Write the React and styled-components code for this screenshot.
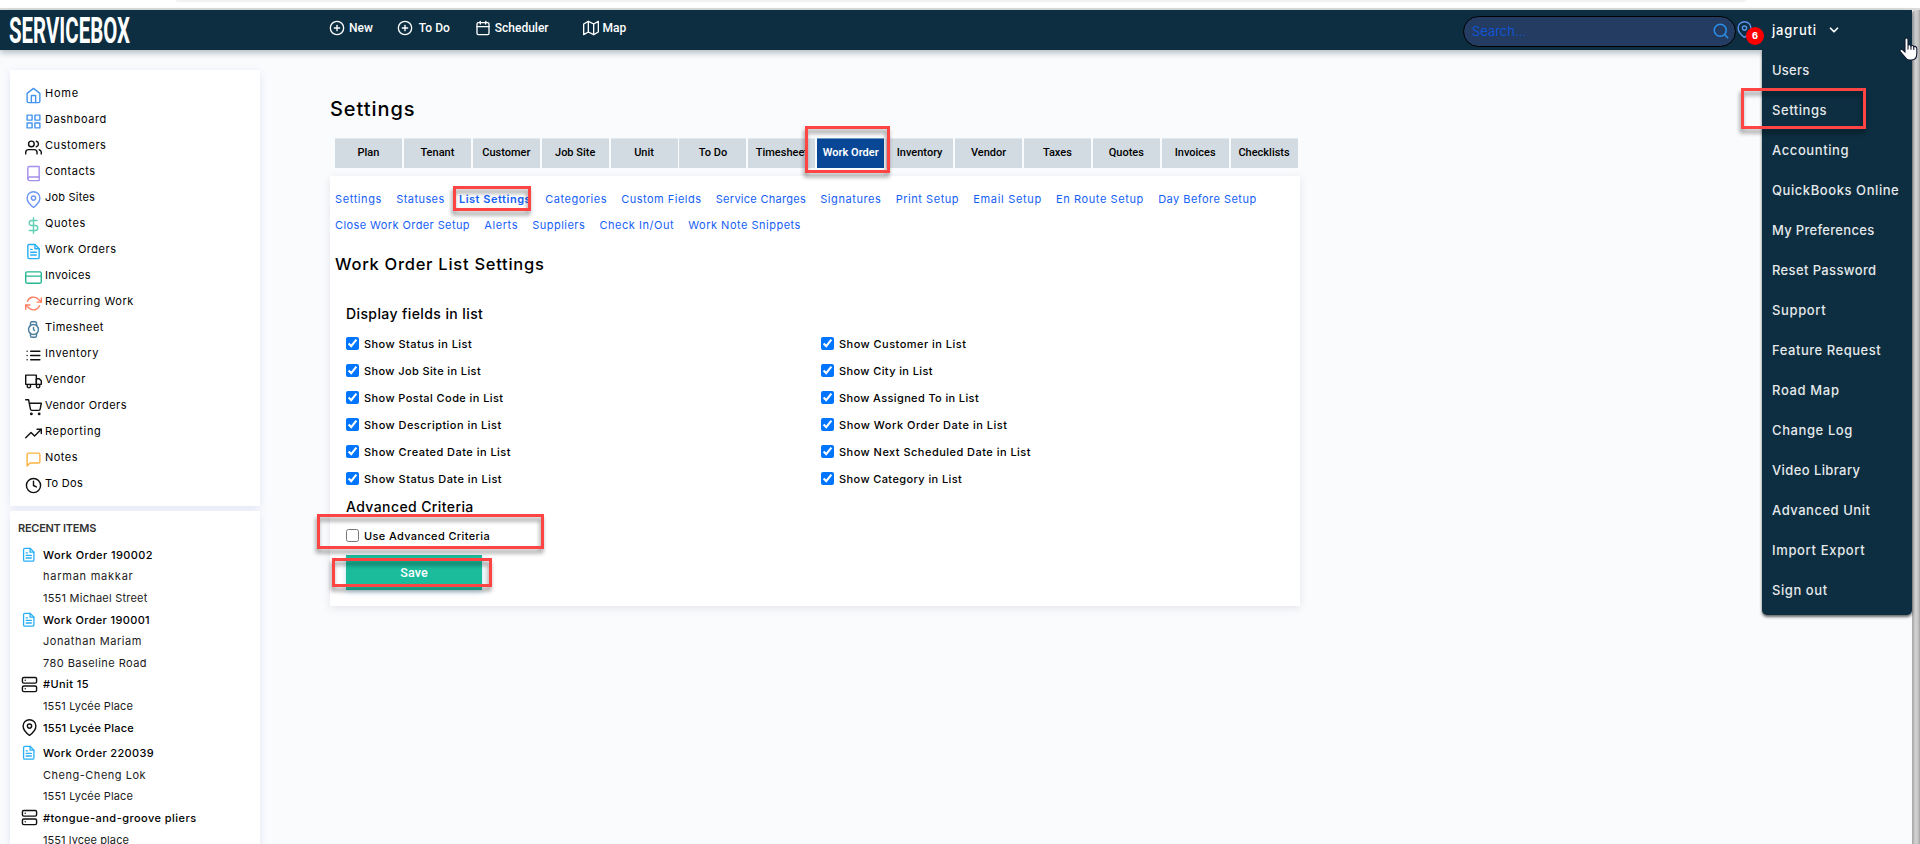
import styled, { createGlobalStyle } from "styled-components"
import {
  FiHome, FiGrid, FiUsers, FiBook, FiMapPin, FiDollarSign, FiFileText, FiCreditCard,
  FiRefreshCw, FiWatch, FiList, FiTruck, FiShoppingCart, FiTrendingUp, FiMessageSquare,
  FiClock, FiServer, FiPlusCircle, FiCalendar, FiMap, FiSearch, FiChevronDown
} from "react-icons/fi"

const GlobalStyle = createGlobalStyle`
* { box-sizing: border-box; }
body {
  margin: 0;
  background: #fafbfd;
  color: #000;
  font-family: Inter, "Noto Sans", sans-serif;
  font-size: 11px;
}
`
const Page = styled.div`
position: relative;
height: 844px;
overflow: hidden;
display: flex;
flex-direction: column;
`
const BrowserEdge = styled.div`
flex: none;
height: 10px;
background: #fff;
border-bottom: 2px solid #dcdcdc;
padding: 0 174px 0 176px;
`
const AddressBar = styled.div`
height: 2px;
background: #f2f2f2;
border-radius: 0 0 4px 4px;
`
const Body = styled.div`
flex: 1;
min-height: 0;
display: flex;
`
const Viewport = styled.div`
flex: 1;
min-width: 0;
display: flex;
flex-direction: column;
`
const Scrollbar = styled.div`
width: 8px;
border-radius: 4px 0 0 0;
background: linear-gradient(to right, #a4a4a4, #d2d2d2 45%, #c6c6c6 75%, #a2a2a2);
`
const Header = styled.header`
flex: none;
position: relative;
z-index: 2;
height: 40px;
background: #0c2e40;
color: #fff;
display: flex;
align-items: center;
padding-left: 8px;
box-shadow: 0 3px 6px rgba(12,46,64,0.3);
`
const Logo = styled.svg`
width: 126px;
height: 40px;
overflow: visible;
fill: #fff;
font-family: Roboto, sans-serif;
font-weight: 700;
font-size: 37px;
`
const TopNav = styled.nav`
display: flex;
align-items: center;
align-self: flex-start;
margin-left: 195px;
height: 35px;
`
const TopLink = styled.a`
display: flex;
align-items: center;
gap: ${p => p.$gap}px;
margin-right: ${p => p.$after}px;
font-family: Roboto, sans-serif;
font-weight: 500;
font-size: 12px;
white-space: nowrap;
`
const Search = styled.div`
display: flex;
align-items: center;
width: 273px;
height: 31px;
margin: 2px 0 0 auto;
padding: 0 5px 0 7px;
background: #243c61;
border: 1px solid #000;
border-radius: 16px;
color: #2b8fe8;
`
const SearchInput = styled.input`
flex: 1;
min-width: 0;
border: 0;
padding: 0 0 0 1px;
outline: none;
background: transparent;
font: 300 13px Inter, sans-serif;
letter-spacing: 0.1px;
&::placeholder {
  color: #0a5bea;
  opacity: 1;
}
`
const PinButton = styled.div`
position: relative;
width: 17px;
height: 17px;
margin: 0 19px 2px 0;
color: #5b93ea;
`
const Badge = styled.span`
position: absolute;
left: 10px;
top: 6px;
width: 18px;
height: 18px;
border-radius: 50%;
background: #fb0000;
color: #fff;
font-weight: 800;
font-size: 9px;
line-height: 18px;
text-align: center;
`
const Account = styled.div`
display: flex;
align-items: center;
gap: 10px;
width: 140px;
font-weight: 500;
font-size: 13px;
letter-spacing: 0.8px;
`
const Dropdown = styled.div`
position: absolute;
z-index: 3;
right: 8px;
top: 50px;
width: 150px;
padding-bottom: 5px;
background: #0c2e40;
border-radius: 0 0 5px 5px;
box-shadow: 0 2px 3px rgba(0,0,0,0.6);
`
const DropdownItem = styled.a`
display: flex;
align-items: center;
height: 40px;
padding-left: 10px;
color: #e6e9eb;
font-weight: 500;
font-size: 13px;
letter-spacing: ${p => p.$ls}px;
white-space: nowrap;
`
const Columns = styled.div`
flex: 1;
min-height: 0;
display: flex;
align-items: flex-start;
padding: 20px 0 0 10px;
`
const Sidebar = styled.aside`
width: 250px;
display: flex;
flex-direction: column;
gap: 5px;
`
const SideCard = styled.div`
background: #fff;
padding: ${p => p.$pad};
box-shadow: 0 2px 8px rgba(70,90,190,0.13);
`
const NavItem = styled.a`
display: flex;
align-items: center;
height: 26px;
gap: 3px;
letter-spacing: ${p => p.$ls}px;
svg {
  color: ${p => p.$color};
  margin-top: 5px;
}
`
const RecentTitle = styled.div`
height: 18px;
line-height: 18px;
margin: 0 0 7px -2px;
padding-left: 10px;
font-weight: 600;
letter-spacing: -0.27px;
color: #333;
`
const RecentRow = styled.div`
display: flex;
align-items: center;
height: 21.6px;
margin-top: ${p => p.$gap || 0}px;
font-weight: ${p => p.$bold ? 500 : 400};
letter-spacing: ${p => p.$ls}px;
color: ${p => p.$bold ? "#000" : "#1a1a1a"};
`
const RecentIcon = styled.span`
width: 22px;
margin: 0 3px 0 8px;
display: flex;
justify-content: center;
color: ${p => p.$color};
`
const Main = styled.main`
width: 970px;
margin-left: 70px;
`
const PageTitle = styled.h1`
margin: 27px 0 17px;
font-weight: 500;
font-size: 20px;
line-height: 24px;
letter-spacing: 0.94px;
`
const Tabs = styled.div`
display: flex;
gap: 1.9px;
padding-left: 5px;
margin-bottom: 8px;
`
const Tab = styled.div`
width: 67px;
height: 30px;
padding-bottom: 2px;
display: flex;
align-items: center;
justify-content: center;
border-top: 1px solid ${p => p.$active ? "#6f97c0" : "#e3e8ec"};
background: ${p => p.$active ? "#074796" : "#d3dbe2"};
color: ${p => p.$active ? "#fff" : "#000"};
font-family: Roboto, sans-serif;
font-weight: ${p => p.$active ? 600 : 500};
font-size: 11px;
white-space: nowrap;
`
const Card = styled.section`
height: 430px;
padding: 10px 5px 16px;
background: #fff;
box-shadow: 0 2px 8px rgba(60,70,90,0.12);
`
const SubLinks = styled.div`
display: flex;
align-items: center;
gap: 14.2px;
height: 26px;
`
const SubLink = styled.a`
color: #1560f5;
font-weight: ${p => p.$active ? 600 : 400};
letter-spacing: ${p => p.$ls}px;
white-space: nowrap;
`
const CardTitle = styled.h2`
margin: 14px 0 28px;
font-weight: 500;
font-size: 16.5px;
line-height: 24px;
letter-spacing: 0.73px;
`
const Form = styled.div`
padding-left: 11px;
`
const GroupTitle = styled.h3`
margin: ${p => p.$margin};
font-weight: 500;
font-size: 14px;
line-height: 20px;
letter-spacing: 0.4px;
`
const Fields = styled.div`
display: grid;
grid-template-columns: 475px 475px;
`
const Field = styled.label`
display: flex;
align-items: center;
height: 27px;
gap: 5px;
font-weight: 500;
letter-spacing: ${p => p.$ls}px;
input {
  width: 13px;
  height: 13px;
  margin: 0;
}
span {
  padding-top: 1px;
}
`
const SaveButton = styled.button`
display: block;
width: 136px;
height: 35px;
margin-top: 6px;
padding: 0 0 1px;
border: 0;
background: #1abc9c;
color: #fff;
font: 500 12.5px Roboto, sans-serif;
letter-spacing: 0.1px;
box-shadow: 0 2px 6px rgba(60,150,200,0.3);
`
/* red frame laid over the screen */
const Callout = styled.div`
position: absolute;
z-index: 4;
left: ${p => p.$x}px;
top: ${p => p.$y}px;
width: ${p => p.$w}px;
height: ${p => p.$h}px;
border: 3px solid #ff4444;
filter: drop-shadow(-1px 4px 2px rgba(0,0,0,0.42));
`
const Cursor = styled.svg`
position: absolute;
z-index: 5;
left: 1899px;
top: 37px;
width: 19px;
height: 24px;
`

const nav = [
  ["Home", FiHome, "#4595ee", 0.8],
  ["Dashboard", FiGrid, "#4595ee", 0.55],
  ["Customers", FiUsers, "#111", 0.56],
  ["Contacts", FiBook, "#a48fec", 0.49],
  ["Job Sites", FiMapPin, "#6c96f2", 0.21],
  ["Quotes", FiDollarSign, "#62d0b5", 0.6],
  ["Work Orders", FiFileText, "#27aef5", 0.52],
  ["Invoices", FiCreditCard, "#27b893", 0.37],
  ["Recurring Work", FiRefreshCw, "#ff7d62", 0.57],
  ["Timesheet", FiWatch, "#4a7c9c", 0.49],
  ["Inventory", FiList, "#111", 0.58],
  ["Vendor", FiTruck, "#111", 0.6],
  ["Vendor Orders", FiShoppingCart, "#111", 0.46],
  ["Reporting", FiTrendingUp, "#111", 0.67],
  ["Notes", FiMessageSquare, "#fbb344", 0.48],
  ["To Dos", FiClock, "#111", 0.29],
]

const recent = [
  { text: "Work Order 190002", icon: FiFileText, color: "#27aef5", ls: 0.4 },
  { text: "harman makkar", ls: 0.76 },
  { text: "1551 Michael Street", ls: 0.23 },
  { text: "Work Order 190001", icon: FiFileText, color: "#27aef5", ls: 0.36 },
  { text: "Jonathan Mariam", ls: 0.58 },
  { text: "780 Baseline Road", ls: 0.45 },
  { text: "#Unit 15", icon: FiServer, color: "#111", ls: 0.42 },
  { text: "1551 Lycée Place", ls: 0.15 },
  { text: "1551 Lycée Place", icon: FiMapPin, color: "#111", ls: 0.15 },
  { text: "Work Order 220039", icon: FiFileText, color: "#27aef5", ls: 0.34, gap: 4 },
  { text: "Cheng-Cheng Lok", ls: 0.51 },
  { text: "1551 Lycée Place", ls: 0.15 },
  { text: "#tongue-and-groove pliers", icon: FiServer, color: "#111", ls: 0.46 },
  { text: "1551 lycee place", ls: 0.09 },
]

const tabs = ["Plan", "Tenant", "Customer", "Job Site", "Unit", "To Do", "Timesheet", "Work Order",
  "Inventory", "Vendor", "Taxes", "Quotes", "Invoices", "Checklists"]

const subLinks = [
  [["Settings", 0.61], ["Statuses", 0.44], ["List Settings", 0.52], ["Categories", 0.5],
    ["Custom Fields", 0.5], ["Service Charges", 0.28], ["Signatures", 0.58], ["Print Setup", 0.54],
    ["Email Setup", 0.67], ["En Route Setup", 0.6], ["Day Before Setup", 0.47]],
  [["Close Work Order Setup", 0.41], ["Alerts", 0.6], ["Suppliers", 0.47], ["Check In/Out", 0.53],
    ["Work Note Snippets", 0.5]],
]

const fields = [
  ["Show Status in List", 0.45], ["Show Customer in List", 0.47],
  ["Show Job Site in List", 0.39], ["Show City in List", 0.39],
  ["Show Postal Code in List", 0.42], ["Show Assigned To in List", 0.37],
  ["Show Description in List", 0.46], ["Show Work Order Date in List", 0.52],
  ["Show Created Date in List", 0.47], ["Show Next Scheduled Date in List", 0.47],
  ["Show Status Date in List", 0.47], ["Show Category in List", 0.4],
]

const menu = [
  ["Users", 0.24], ["Settings", 0.55], ["Accounting", 0.6], ["QuickBooks Online", 0.57],
  ["My Preferences", 0.3], ["Reset Password", 0.37], ["Support", 0.64], ["Feature Request", 0.53],
  ["Road Map", 0.65], ["Change Log", 0.6], ["Video Library", 0.4], ["Advanced Unit", 0.52],
  ["Import Export", 0.66], ["Sign out", 0.57],
]

const TopBar = () => (
  <Header>
    <Logo viewBox="0 0 126 40">
      <text x="1" y="33" textLength="121" lengthAdjust="spacingAndGlyphs">SERVICEBOX</text>
    </Logo>
    <TopNav>
      <TopLink $gap={4} $after={24}><FiPlusCircle size={16}/>New</TopLink>
      <TopLink $gap={6} $after={25}><FiPlusCircle size={16}/>To Do</TopLink>
      <TopLink $gap={4} $after={34}><FiCalendar size={16}/>Scheduler</TopLink>
      <TopLink $gap={4} $after={0}><FiMap size={16}/>Map</TopLink>
    </TopNav>
    <Search>
      <SearchInput placeholder="Search..."/>
      <FiSearch size={18}/>
    </Search>
    <PinButton>
      <FiMapPin size={17}/>
      <Badge>6</Badge>
    </PinButton>
    <Account>jagruti<FiChevronDown size={14} strokeWidth={3}/></Account>
  </Header>
)

const SideMenu = () => (
  <Sidebar>
    <SideCard $pad="10px 15px">
      {nav.map(([text, Icon, color, ls]) => (
        <NavItem key={text} $color={color} $ls={ls}><Icon size={17}/>{text}</NavItem>
      ))}
    </SideCard>
    <SideCard $pad="8px 0 20px">
      <RecentTitle>RECENT ITEMS</RecentTitle>
      {recent.map(({ text, icon: Icon, color, ls, gap }, i) => (
        <RecentRow key={i} $bold={!!Icon} $ls={ls} $gap={gap}>
          <RecentIcon $color={color}>
            {Icon && <Icon size={Icon === FiFileText ? 15.5 : 17}/>}
          </RecentIcon>
          {text}
        </RecentRow>
      ))}
    </SideCard>
  </Sidebar>
)

const App = () => {
  return (
    <Page>
      <GlobalStyle/>
      <BrowserEdge><AddressBar/></BrowserEdge>
      <Body>
        <Viewport>
          <TopBar/>
          <Columns>
            <SideMenu/>
            <Main>
              <PageTitle>Settings</PageTitle>
              <Tabs>
                {tabs.map(t => <Tab key={t} $active={t === "Work Order"}>{t}</Tab>)}
              </Tabs>
              <Card>
                {subLinks.map((row, i) => (
                  <SubLinks key={i}>
                    {row.map(([text, ls]) => (
                      <SubLink key={text} $ls={ls} $active={text === "List Settings"}>{text}</SubLink>
                    ))}
                  </SubLinks>
                ))}
                <CardTitle>Work Order List Settings</CardTitle>
                <Form>
                  <GroupTitle $margin="0 0 6px">Display fields in list</GroupTitle>
                  <Fields>
                    {fields.map(([text, ls]) => (
                      <Field key={text} $ls={ls}><input type="checkbox" defaultChecked/><span>{text}</span></Field>
                    ))}
                  </Fields>
                  <GroupTitle $margin="5px 0">Advanced Criteria</GroupTitle>
                  <Field $ls={0.36}><input type="checkbox"/><span>Use Advanced Criteria</span></Field>
                  <SaveButton>Save</SaveButton>
                </Form>
              </Card>
            </Main>
          </Columns>
        </Viewport>
        <Scrollbar/>
      </Body>

      <Dropdown>
        {menu.map(([text, ls]) => <DropdownItem key={text} $ls={ls}>{text}</DropdownItem>)}
      </Dropdown>

      <Callout $x={805} $y={126} $w={85} $h={47}/>
      <Callout $x={453} $y={186} $w={78} $h={25}/>
      <Callout $x={317} $y={514} $w={227} $h={35}/>
      <Callout $x={332} $y={558} $w={160} $h={29}/>
      <Callout $x={1741} $y={88} $w={125} $h={41}/>

      <Cursor viewBox="0 0 19 24">
        <path
          d="M6 2.5 C6 .5 9 .5 9 2.5 V8.5 C9.5 7.2 11.8 7.4 12 9 C12.8 8 14.6 8.4 14.8 9.8 C15.8 9 17.8 9.6 17.8 11.4 V16.5 C17.8 20 16 23 12.5 23 H10.5 C8 23 6.8 21.6 5.5 19.5 L1.3 14.6 C.2 12.8 2.4 11.8 3.6 12.8 L6 15 Z"
          fill="#fff" stroke="#111a30" strokeWidth="1.1"/>
        <path d="M9 8.5 V12.5 M12 9 V12.8 M14.8 10 V13" fill="none" stroke="#111a30" strokeWidth="1.1"/>
      </Cursor>
    </Page>
  )
}

export default App
